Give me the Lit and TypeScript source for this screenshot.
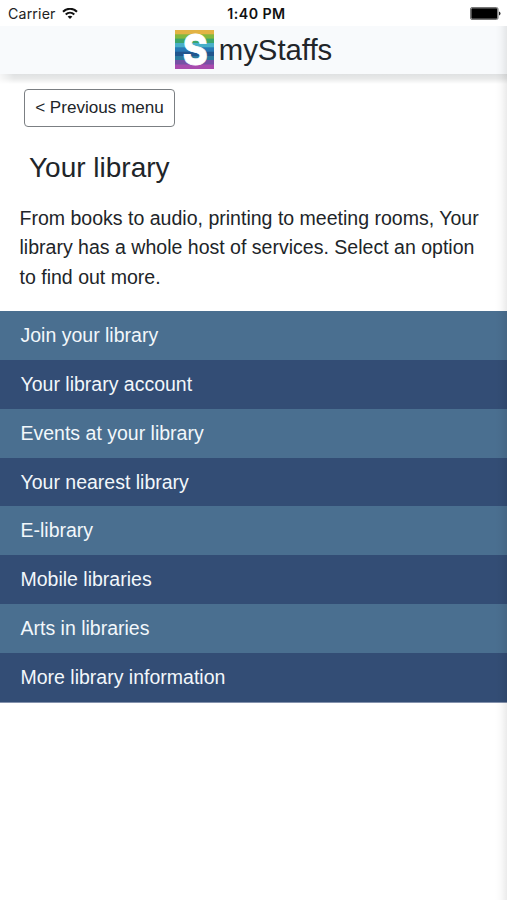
import { LitElement, html, css } from "lit";
import { customElement } from "lit/decorators.js";

const MENU = [
  "Join your library",
  "Your library account",
  "Events at your library",
  "Your nearest library",
  "E-library",
  "Mobile libraries",
  "Arts in libraries",
  "More library information",
];

@customElement("status-bar")
class StatusBar extends LitElement {
  static styles = css`
    :host {
      display: grid;
      grid-template-columns: 1fr auto 1fr;
      align-items: center;
      height: 26px;
      padding: 1px 6px 0 8px;
      box-sizing: border-box;
      background: #fff;
      color: #111;
      font: 14.2px/24px Inter, sans-serif;
    }
    .carrier { display: flex; align-items: center; gap: 6px; letter-spacing: 0.15px; color: #222; }
    .time { font-weight: 600; letter-spacing: 0.45px; padding-left: 4px; }
    .battery { justify-self: end; display: block; }
    svg { display: block; }
  `;
  render() {
    return html`
      <div class="carrier">
        <span>Carrier</span>
        <svg width="16" height="12" viewBox="0 0 16 12" fill="none" stroke="#111" stroke-width="2">
          <path d="M1 3.7C5 -.2 11 -.2 15 3.7" />
          <path d="M3.7 6.5C6.2 4.1 9.8 4.1 12.3 6.5" />
          <path d="M8 11.1 5.6 8.6C7 7.4 9 7.4 10.4 8.6Z" fill="#111" stroke="none" />
        </svg>
      </div>
      <div class="time">1:40 PM</div>
      <svg class="battery" width="31" height="13" viewBox="0 0 31 13">
        <rect x=".5" y=".5" width="27.5" height="12" rx="1.5" fill="#fff" stroke="#777" />
        <rect x="1.3" y="1.3" width="26" height="10.4" rx=".8" fill="#000" />
        <path d="M29 4.5q1.5.5 1.5 2t-1.5 2z" fill="#222" />
      </svg>
    `;
  }
}

@customElement("app-root")
class AppRoot extends LitElement {
  static styles = css`
    :host {
      display: block;
      position: relative;
      height: 900px;
      overflow: hidden;
      background: #fff;
      color: #212529;
      font: 19.55px/29.4px "Liberation Sans", Arial, sans-serif;
    }
    .edge {
      position: absolute;
      inset: 26px 0 0 auto;
      width: 12px;
      background: linear-gradient(90deg, rgba(0, 0, 0, 0), rgba(0, 0, 0, 0.025) 50%, rgba(0, 0, 0, 0.08));
      pointer-events: none;
    }
    .brand {
      box-sizing: border-box;
      display: flex;
      justify-content: center;
      align-items: center;
      gap: 5px;
      height: 48px;
      padding: 0 0 1px 0;
      background: #f8fafc;
      font-size: 29.3px;
    }
    .logo { display: block; overflow: visible; }
    .letter { font: 800 43px Inter, sans-serif; fill: #fff; stroke: #fff; stroke-width: 0.8px; }
    .shade {
      height: 10px;
      background: linear-gradient(#dfe1e2, #e8e9e9 45%, #fff);
      -webkit-mask-image: linear-gradient(90deg, rgba(0, 0, 0, 0.3), #000 14px);
      mask-image: linear-gradient(90deg, rgba(0, 0, 0, 0.3), #000 14px);
    }
    .content { padding: 5px 20px 19px 19px; }
    .back {
      display: block;
      box-sizing: border-box;
      width: 151px;
      height: 38px;
      margin-left: 5px;
      padding: 0;
      border: 1px solid #7b7f83;
      border-radius: 4px;
      background: #fff;
      color: #212529;
      font: 17.1px/36px "Liberation Sans", Arial, sans-serif;
      white-space: nowrap;
    }
    h1 { margin: 23px 0 18px 10px; font-size: 28px; line-height: 36px; font-weight: 400; }
    p { margin: 0 0 0 0.5px; }
    ul { margin: 0; padding: 0; list-style: none; border-bottom: 1px solid #8492ad; }
    li {
      box-sizing: border-box;
      height: 48.8px;
      padding-left: 20.5px;
      line-height: 48.8px;
      background: #4a6f90;
      color: #f2f7fb;
      font-size: 19.5px;
    }
    li:nth-child(even) { background: #334d75; }
  `;
  render() {
    return html`
      <status-bar></status-bar>
      <header class="brand">
        <svg class="logo" width="39" height="39" viewBox="0 0 39 39">
          <rect width="39" height="39" fill="#a84bae" />
          <rect width="39" height="34.5" fill="#7650a5" />
          <rect width="39" height="30" fill="#2b7b9e" />
          <rect width="39" height="26" fill="#21568e" />
          <rect width="39" height="21.7" fill="#2879b5" />
          <rect width="39" height="17.3" fill="#48afc8" />
          <rect width="39" height="13" fill="#3ca66b" />
          <rect width="39" height="8.6" fill="#83b83f" />
          <rect width="39" height="4.3" fill="#e2b344" />
          <text class="letter" transform="translate(20.3 35.2) scale(.88 1)" text-anchor="middle">S</text>
        </svg>
        <span>myStaffs</span>
      </header>
      <div class="shade"></div>
      <main>
        <section class="content">
          <button class="back">&lt; Previous menu</button>
          <h1>Your library</h1>
          <p>From books to audio, printing to meeting rooms, Your library has a whole host of services. Select an option to find out more.</p>
        </section>
        <ul>
          ${MENU.map((item) => html`<li>${item}</li>`)}
        </ul>
      </main>
      <div class="edge"></div>
    `;
  }
}
